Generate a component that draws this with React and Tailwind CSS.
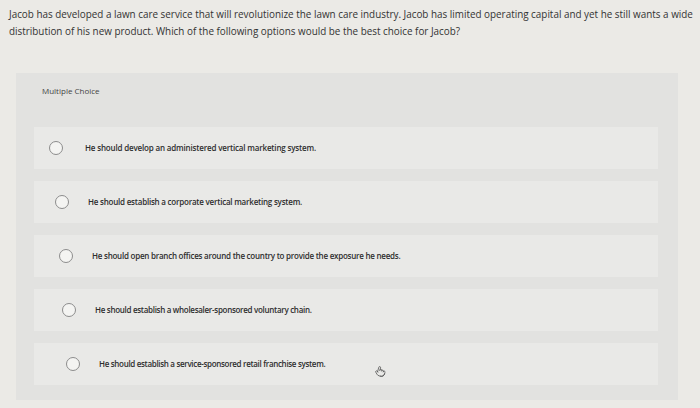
import { Pointer } from 'lucide-react';

const options = [
  { text: 'He should develop an administered vertical marketing system.', pad: 'pl-[15px]', gap: 'gap-[22px]', track: 'tracking-[-0.17px]' },
  { text: 'He should establish a corporate vertical marketing system.', pad: 'pl-[21px]', gap: 'gap-[19px]', track: 'tracking-[-0.22px]' },
  { text: 'He should open branch offices around the country to provide the exposure he needs.', pad: 'pl-[25px]', gap: 'gap-[19px]', track: 'tracking-[-0.24px]' },
  { text: 'He should establish a wholesaler-sponsored voluntary chain.', pad: 'pl-[28px]', gap: 'gap-[19px]', track: 'tracking-[-0.3px]' },
  { text: 'He should establish a service-sponsored retail franchise system.', pad: 'pl-[32px]', gap: 'gap-[19px]', track: 'tracking-[-0.32px]' },
];

const App = () => {
  return (
    <div className="w-[700px] h-[408px] overflow-hidden bg-[#ebeae6] text-[#2f2f2f]" style={{ fontFamily: '"Open Sans", "Liberation Sans", sans-serif' }}>
      <div className="pl-[9px] pt-[6px] text-[9.9px] leading-[17px] font-medium text-[#333]">
        <p className="whitespace-nowrap">Jacob has developed a lawn care service that will revolutionize the lawn care industry. Jacob has limited operating capital and yet he still wants a wide</p>
        <p className="whitespace-nowrap">distribution of his new product. Which of the following options would be the best choice for Jacob?</p>
      </div>

      <div className="mt-[33px] ml-[16px] w-[662px] bg-[#e2e2e0] pt-[12px] pb-[15px]">
        <div className="pl-[26px] text-[8px] font-medium text-[#444] h-[42px]">Multiple Choice</div>

        <div className="flex flex-col gap-[12px] ml-[18px] mr-[20px]">
          {options.map((opt, i) => (
            <div key={i} className={`h-[42px] bg-[#e9e9e7] flex items-center ${opt.pad} ${opt.gap} relative`}>
              <span className="w-[14px] h-[14px] shrink-0 rounded-full border-[1.5px] border-[#8c8c8c] bg-[#f4f4f2]" />
              <span className={`text-[8px] ${opt.track} font-semibold text-[#2e2e2e] whitespace-nowrap`}>{opt.text}</span>
              {i === 4 && (
                <Pointer size={11} strokeWidth={1.6} className="absolute left-[341px] top-[23px] text-[#555] rotate-[15deg]" />
              )}
            </div>
          ))}
        </div>
      </div>
    </div>
  );
};

export default App;
